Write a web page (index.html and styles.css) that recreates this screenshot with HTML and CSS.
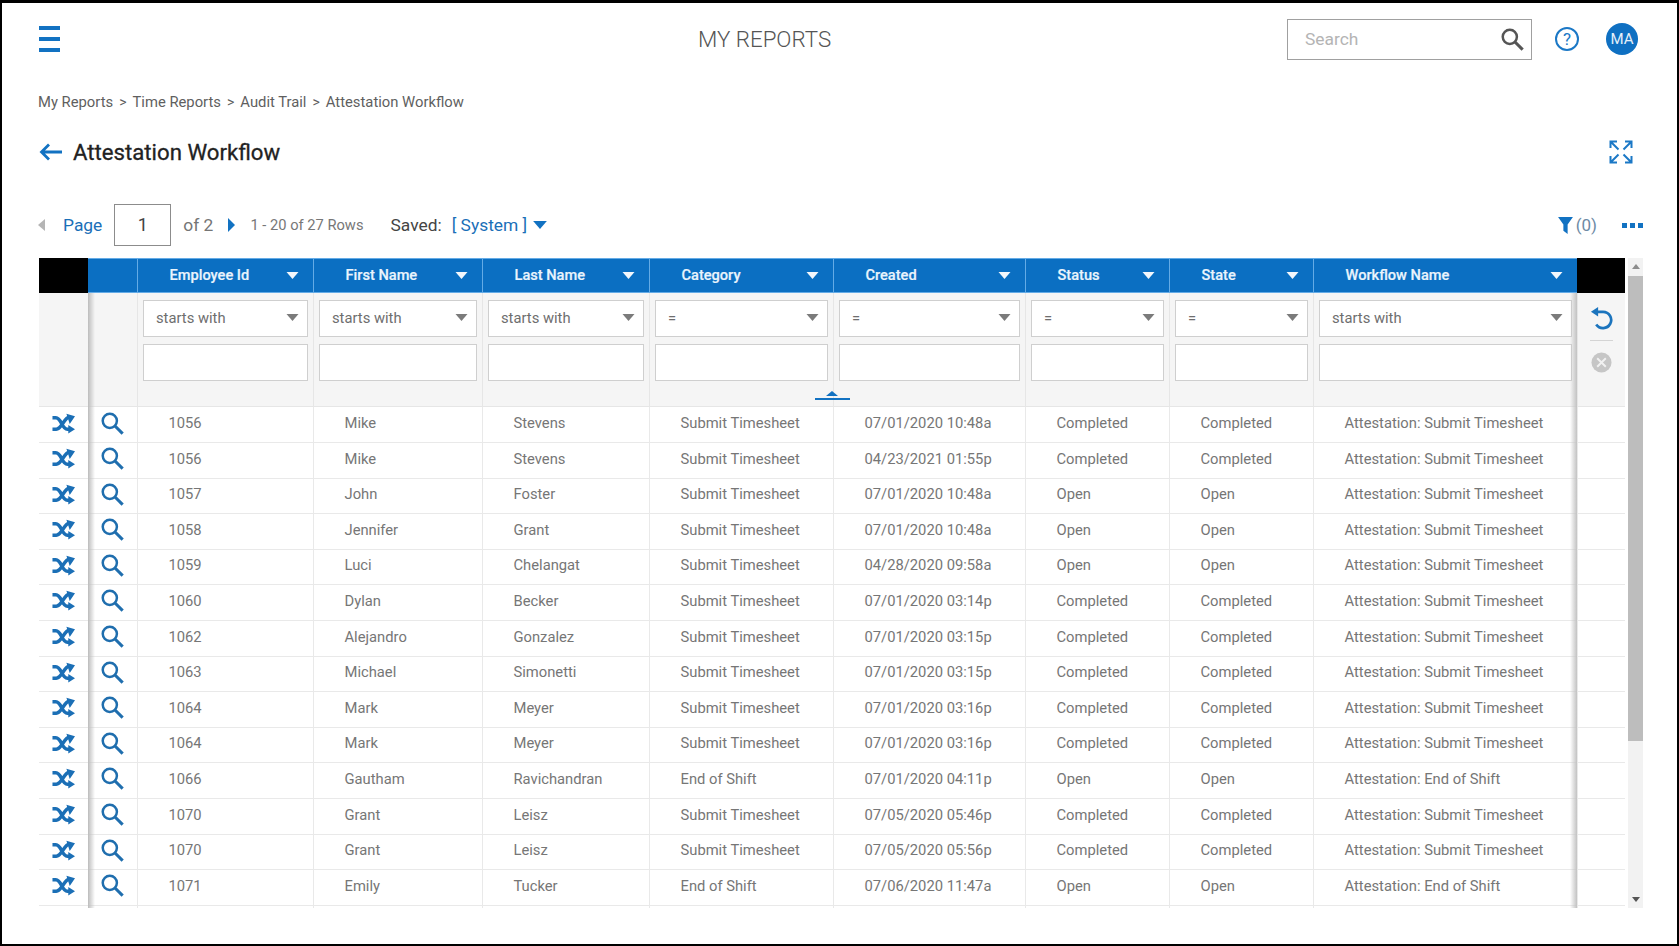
FILE: index.html
```html
<!DOCTYPE html>
<html lang="en">
<head>
<meta charset="utf-8">
<title>Attestation Workflow</title>
<link rel="stylesheet" href="styles.css">
</head>
<body>
<svg class="defs" width="0" height="0" aria-hidden="true">
  <symbol id="i-shuffle" viewBox="0 0 24 21">
    <path d="M0.500 4.500h3.500c6 0 6 12 12 12h2.500M0.500 16.500h4c3 0 5-3.500 7-6.500s4-6 7-6.500" fill="none" stroke="currentColor" stroke-width="3.600"/>
    <path d="M15 0.200l9 2.800-5.500 8zM17 12l7 4.500-7 4.500z" fill="currentColor"/>
  </symbol>
  <symbol id="i-search" viewBox="0 0 24 24">
    <circle cx="9.2" cy="9.2" r="7.4" fill="none" stroke="currentColor" stroke-width="2.6"/>
    <path d="M14.6 14.6l8 8" fill="none" stroke="currentColor" stroke-width="3.2"/>
  </symbol>
  <symbol id="i-caret" viewBox="0 0 12 7">
    <path d="M0 0h12L6 7z" fill="currentColor"/>
  </symbol>
</svg>
<div class="frame">
  <header class="topbar">
    <div class="burger"><span></span><span></span><span></span></div>
    <div class="app-title">MY REPORTS</div>
    <div class="search">
      <span class="search-ph">Search</span>
      <svg class="search-icon"><use href="#i-search"/></svg>
    </div>
    <div class="help">?</div>
    <div class="avatar">MA</div>
  </header>

  <nav class="crumbs">
    <span>My Reports</span><i>&gt;</i><span>Time Reports</span><i>&gt;</i><span>Audit Trail</span><i>&gt;</i><span>Attestation Workflow</span>
  </nav>

  <div class="title-row">
    <svg class="back" viewBox="0 0 24 18"><path d="M23 9H3M10 1.5L2.5 9l7.500 7.500" fill="none" stroke="currentColor" stroke-width="2.800"/></svg>
    <h1>Attestation Workflow</h1>
    <svg class="expand" viewBox="0 0 24 24">
      <g fill="none" stroke="currentColor" stroke-width="2">
        <path d="M1.500 8V1.500H8M1.500 1.500l8 8M22.500 8V1.500H16M22.500 1.500l-8 8M1.500 16v6.500H8M1.500 22.500l8-8M22.500 16v6.500H16M22.500 22.500l-8-8"/>
      </g>
    </svg>
  </div>

  <div class="pager">
    <span class="tri-left"></span>
    <span class="page-label">Page</span>
    <div class="page-box">1</div>
    <span class="page-of">of 2</span>
    <span class="tri-right"></span>
    <span class="page-rows">1 - 20 of 27 Rows</span>
    <span class="saved">Saved:</span>
    <span class="saved-val">[ System ]</span>
    <svg class="saved-caret"><use href="#i-caret"/></svg>
    <svg class="funnel" viewBox="0 0 14 16"><path d="M0 0h14L9 7v9L5 13V7z" fill="currentColor"/></svg>
    <span class="filter-count">(0)</span>
    <div class="dots"><span></span><span></span><span></span></div>
  </div>

  <div class="grid-wrap">
    <div class="grid">
      <div class="row head">
        <div class="hc black"></div>
        <div class="hc"></div>
        <div class="hc">Employee Id<svg><use href="#i-caret"/></svg></div>
        <div class="hc">First Name<svg><use href="#i-caret"/></svg></div>
        <div class="hc">Last Name<svg><use href="#i-caret"/></svg></div>
        <div class="hc">Category<svg><use href="#i-caret"/></svg></div>
        <div class="hc">Created<svg><use href="#i-caret"/></svg></div>
        <div class="hc">Status<svg><use href="#i-caret"/></svg></div>
        <div class="hc">State<svg><use href="#i-caret"/></svg></div>
        <div class="hc">Workflow Name<svg><use href="#i-caret"/></svg></div>
        <div class="hc black"></div>
      </div>
      <div class="row filters">
        <div class="fc"></div>
        <div class="fc"></div>
        <div class="fc"><div class="sel">starts with<svg><use href="#i-caret"/></svg></div><div class="inp"></div></div>
        <div class="fc"><div class="sel">starts with<svg><use href="#i-caret"/></svg></div><div class="inp"></div></div>
        <div class="fc"><div class="sel">starts with<svg><use href="#i-caret"/></svg></div><div class="inp"></div></div>
        <div class="fc"><div class="sel">=<svg><use href="#i-caret"/></svg></div><div class="inp"></div></div>
        <div class="fc"><div class="sel">=<svg><use href="#i-caret"/></svg></div><div class="inp"></div></div>
        <div class="fc"><div class="sel">=<svg><use href="#i-caret"/></svg></div><div class="inp"></div></div>
        <div class="fc"><div class="sel">=<svg><use href="#i-caret"/></svg></div><div class="inp"></div></div>
        <div class="fc"><div class="sel">starts with<svg><use href="#i-caret"/></svg></div><div class="inp"></div></div>
        <div class="fc actions">
          <svg class="undo" viewBox="0 0 24 24"><path d="M6 5h7.500a8.500 8.500 0 1 1-7 13.200" fill="none" stroke="currentColor" stroke-width="2.800"/><path d="M8.500 0v10L1 5z" fill="currentColor"/></svg>
          <span class="act-line"></span>
          <svg class="clear" viewBox="0 0 22 22"><circle cx="11" cy="11" r="10.500" fill="#c6c6c6"/><path d="M6.500 6.500l9 9M15.500 6.500l-9 9" stroke="#f1f1f1" stroke-width="2"/></svg>
        </div>
        <div class="collapse"><span></span></div>
      </div>

      <div class="row"><div class="c ic"><svg class="shuffle"><use href="#i-shuffle"/></svg></div><div class="c ic"><svg class="mag"><use href="#i-search"/></svg></div><div class="c">1056</div><div class="c">Mike</div><div class="c">Stevens</div><div class="c">Submit Timesheet</div><div class="c">07/01/2020 10:48a</div><div class="c">Completed</div><div class="c">Completed</div><div class="c">Attestation: Submit Timesheet</div><div class="c"></div></div>
      <div class="row"><div class="c ic"><svg class="shuffle"><use href="#i-shuffle"/></svg></div><div class="c ic"><svg class="mag"><use href="#i-search"/></svg></div><div class="c">1056</div><div class="c">Mike</div><div class="c">Stevens</div><div class="c">Submit Timesheet</div><div class="c">04/23/2021 01:55p</div><div class="c">Completed</div><div class="c">Completed</div><div class="c">Attestation: Submit Timesheet</div><div class="c"></div></div>
      <div class="row"><div class="c ic"><svg class="shuffle"><use href="#i-shuffle"/></svg></div><div class="c ic"><svg class="mag"><use href="#i-search"/></svg></div><div class="c">1057</div><div class="c">John</div><div class="c">Foster</div><div class="c">Submit Timesheet</div><div class="c">07/01/2020 10:48a</div><div class="c">Open</div><div class="c">Open</div><div class="c">Attestation: Submit Timesheet</div><div class="c"></div></div>
      <div class="row"><div class="c ic"><svg class="shuffle"><use href="#i-shuffle"/></svg></div><div class="c ic"><svg class="mag"><use href="#i-search"/></svg></div><div class="c">1058</div><div class="c">Jennifer</div><div class="c">Grant</div><div class="c">Submit Timesheet</div><div class="c">07/01/2020 10:48a</div><div class="c">Open</div><div class="c">Open</div><div class="c">Attestation: Submit Timesheet</div><div class="c"></div></div>
      <div class="row"><div class="c ic"><svg class="shuffle"><use href="#i-shuffle"/></svg></div><div class="c ic"><svg class="mag"><use href="#i-search"/></svg></div><div class="c">1059</div><div class="c">Luci</div><div class="c">Chelangat</div><div class="c">Submit Timesheet</div><div class="c">04/28/2020 09:58a</div><div class="c">Open</div><div class="c">Open</div><div class="c">Attestation: Submit Timesheet</div><div class="c"></div></div>
      <div class="row"><div class="c ic"><svg class="shuffle"><use href="#i-shuffle"/></svg></div><div class="c ic"><svg class="mag"><use href="#i-search"/></svg></div><div class="c">1060</div><div class="c">Dylan</div><div class="c">Becker</div><div class="c">Submit Timesheet</div><div class="c">07/01/2020 03:14p</div><div class="c">Completed</div><div class="c">Completed</div><div class="c">Attestation: Submit Timesheet</div><div class="c"></div></div>
      <div class="row"><div class="c ic"><svg class="shuffle"><use href="#i-shuffle"/></svg></div><div class="c ic"><svg class="mag"><use href="#i-search"/></svg></div><div class="c">1062</div><div class="c">Alejandro</div><div class="c">Gonzalez</div><div class="c">Submit Timesheet</div><div class="c">07/01/2020 03:15p</div><div class="c">Completed</div><div class="c">Completed</div><div class="c">Attestation: Submit Timesheet</div><div class="c"></div></div>
      <div class="row"><div class="c ic"><svg class="shuffle"><use href="#i-shuffle"/></svg></div><div class="c ic"><svg class="mag"><use href="#i-search"/></svg></div><div class="c">1063</div><div class="c">Michael</div><div class="c">Simonetti</div><div class="c">Submit Timesheet</div><div class="c">07/01/2020 03:15p</div><div class="c">Completed</div><div class="c">Completed</div><div class="c">Attestation: Submit Timesheet</div><div class="c"></div></div>
      <div class="row"><div class="c ic"><svg class="shuffle"><use href="#i-shuffle"/></svg></div><div class="c ic"><svg class="mag"><use href="#i-search"/></svg></div><div class="c">1064</div><div class="c">Mark</div><div class="c">Meyer</div><div class="c">Submit Timesheet</div><div class="c">07/01/2020 03:16p</div><div class="c">Completed</div><div class="c">Completed</div><div class="c">Attestation: Submit Timesheet</div><div class="c"></div></div>
      <div class="row"><div class="c ic"><svg class="shuffle"><use href="#i-shuffle"/></svg></div><div class="c ic"><svg class="mag"><use href="#i-search"/></svg></div><div class="c">1064</div><div class="c">Mark</div><div class="c">Meyer</div><div class="c">Submit Timesheet</div><div class="c">07/01/2020 03:16p</div><div class="c">Completed</div><div class="c">Completed</div><div class="c">Attestation: Submit Timesheet</div><div class="c"></div></div>
      <div class="row"><div class="c ic"><svg class="shuffle"><use href="#i-shuffle"/></svg></div><div class="c ic"><svg class="mag"><use href="#i-search"/></svg></div><div class="c">1066</div><div class="c">Gautham</div><div class="c">Ravichandran</div><div class="c">End of Shift</div><div class="c">07/01/2020 04:11p</div><div class="c">Open</div><div class="c">Open</div><div class="c">Attestation: End of Shift</div><div class="c"></div></div>
      <div class="row"><div class="c ic"><svg class="shuffle"><use href="#i-shuffle"/></svg></div><div class="c ic"><svg class="mag"><use href="#i-search"/></svg></div><div class="c">1070</div><div class="c">Grant</div><div class="c">Leisz</div><div class="c">Submit Timesheet</div><div class="c">07/05/2020 05:46p</div><div class="c">Completed</div><div class="c">Completed</div><div class="c">Attestation: Submit Timesheet</div><div class="c"></div></div>
      <div class="row"><div class="c ic"><svg class="shuffle"><use href="#i-shuffle"/></svg></div><div class="c ic"><svg class="mag"><use href="#i-search"/></svg></div><div class="c">1070</div><div class="c">Grant</div><div class="c">Leisz</div><div class="c">Submit Timesheet</div><div class="c">07/05/2020 05:56p</div><div class="c">Completed</div><div class="c">Completed</div><div class="c">Attestation: Submit Timesheet</div><div class="c"></div></div>
      <div class="row"><div class="c ic"><svg class="shuffle"><use href="#i-shuffle"/></svg></div><div class="c ic"><svg class="mag"><use href="#i-search"/></svg></div><div class="c">1071</div><div class="c">Emily</div><div class="c">Tucker</div><div class="c">End of Shift</div><div class="c">07/06/2020 11:47a</div><div class="c">Open</div><div class="c">Open</div><div class="c">Attestation: End of Shift</div><div class="c"></div></div>
      <div class="row"><div class="c"></div><div class="c"></div><div class="c"></div><div class="c"></div><div class="c"></div><div class="c"></div><div class="c"></div><div class="c"></div><div class="c"></div><div class="c"></div><div class="c"></div></div>
    </div>
    <div class="scrollbar">
      <span class="sb-up"></span>
      <div class="sb-thumb"></div>
      <span class="sb-down"></span>
    </div>
  </div>
</div>
</body>
</html>
```

FILE: styles.css
```css
* { box-sizing: border-box; }
html, body { margin: 0; padding: 0; }
body {
  width: 1679px;
  height: 946px;
  overflow: hidden;
  font-family: Roboto, "Liberation Sans", sans-serif;
  background: #fff;
  color: #555;
}
.defs { position: absolute; }
.frame {
  width: 1679px;
  height: 946px;
  border-style: solid;
  border-color: #000;
  border-width: 3px 2px 2px 2px;
  background: #fff;
  overflow: hidden;
}

/* top bar */
.topbar {
  display: flex;
  align-items: center;
  height: 72px;
}
.burger {
  display: flex;
  flex-direction: column;
  gap: 7px;
  width: 21px;
  margin-left: 37px;
}
.burger span { height: 4px; background: #1272c2; }
.app-title {
  margin-left: 638px;
  width: 135px;
  font-size: 22.3px;
  font-weight: 300;
  color: #555;
  white-space: nowrap;
}
.search {
  display: flex;
  align-items: center;
  justify-content: space-between;
  width: 245px;
  height: 41px;
  margin-left: 454px;
  padding: 0 7px 0 17px;
  border: 1.5px solid #a0a0a0;
}
.search-ph { font-size: 17.4px; color: #b4b4b4; }
.search-icon { width: 23px; height: 23px; color: #555; }
.help {
  width: 24px;
  height: 24px;
  margin-left: 23px;
  border: 2px solid #1b78c6;
  border-radius: 50%;
  font-size: 17px;
  line-height: 20px;
  text-align: center;
  color: #1b78c6;
}
.avatar {
  width: 32px;
  height: 32px;
  margin-left: 27px;
  border-radius: 50%;
  background: #0f70c2;
  color: #e6f0fa;
  font-size: 15px;
  line-height: 32px;
  text-align: center;
}

/* breadcrumb */
.crumbs {
  display: flex;
  align-items: center;
  height: 24px;
  margin-top: 15px;
  padding-left: 36px;
  font-size: 14.8px;
  color: #5f5f5f;
}
.crumbs i { margin: 0 6px; font-style: normal; font-size: 14px; }

/* title */
.title-row {
  display: flex;
  align-items: center;
  height: 40px;
  margin-top: 18px;
  padding-left: 37px;
}
.back { width: 24px; height: 18px; color: #1272c2; }
.title-row h1 {
  margin: 0 0 0 10px;
  font-size: 22.2px;
  font-weight: 400;
  color: #222;
  -webkit-text-stroke: 0.3px #222;
}
.expand { width: 24px; height: 24px; margin-left: auto; margin-right: 44px; color: #1b78c6; }

/* pager */
.pager {
  display: flex;
  align-items: center;
  height: 42px;
  margin-top: 32px;
  padding-left: 36px;
}
.tri-left {
  border-style: solid;
  border-width: 6px 7px 6px 0;
  border-color: transparent #b5b5b5 transparent transparent;
}
.page-label { margin-left: 18px; font-size: 17.4px; color: #1a6fb8; }
.page-box {
  width: 57px;
  height: 42px;
  margin-left: 12px;
  border: 1.5px solid #8c8c8c;
  font-size: 18px;
  line-height: 39px;
  text-align: center;
  color: #444;
}
.page-of { margin-left: 12px; font-size: 17.4px; color: #757575; }
.tri-right {
  margin-left: 15px;
  border-style: solid;
  border-width: 7px 0 7px 7px;
  border-color: transparent transparent transparent #1272c2;
}
.page-rows { margin-left: 15px; font-size: 14.7px; color: #777; }
.saved { margin-left: 27px; font-size: 17.4px; color: #444; }
.saved-val { margin-left: 10px; font-size: 17.4px; color: #1a6fb8; }
.saved-caret { width: 14px; height: 8px; margin-left: 6px; color: #1272c2; }
.funnel { width: 15px; height: 17px; margin-left: auto; color: #1272c2; }
.filter-count { margin-left: 3px; font-size: 17px; color: #6d8aa5; }
.dots { display: flex; gap: 3px; margin-left: 25px; margin-right: 34px; }
.dots span { width: 5px; height: 5px; background: #1272c2; }

/* grid */
.grid-wrap {
  display: flex;
  height: 650px;
  margin-top: 12px;
  margin-left: 37px;
}
.grid {
  position: relative;
  width: 1586px;
  height: 650px;
  overflow: hidden;
}
.grid::before,
.grid::after {
  content: "";
  position: absolute;
  z-index: 2;
  top: 35px;
  bottom: 0;
  width: 7px;
}
.grid::before { left: 49px; background: linear-gradient(to right, #bdbdbd, rgba(200,200,200,0)); }
.grid::after { left: 1531px; background: linear-gradient(to left, #c2c2c2, rgba(200,200,200,0)); }
.row {
  display: grid;
  grid-template-columns: 49px 49px 176px 169px 167px 184px 192px 144px 144px 264px 48px;
  height: 35.6px;
}
.head { height: 35px; background: #0b6fc2; }
.hc {
  display: flex;
  align-items: center;
  justify-content: space-between;
  padding: 0 14px 1px 31.5px;
  border-left: 1px solid #64abe6;
  border-top: 1px solid #64abe6;
  border-bottom: 1px solid #64abe6;
  font-size: 14.6px;
  font-weight: 500;
  color: #e9f4fd;
  white-space: nowrap;
  -webkit-text-stroke: 0.2px #e9f4fd;
}
.hc svg { width: 13px; height: 7px; color: #f2f7fc; }
.hc.black { background: #000; border: 0; }
.hc:nth-child(2) { border-left: 0; }

.filters { position: relative; height: 114px; background: #f5f5f5; }
.fc {
  padding: 7px 5px 0;
  border-left: 1px solid #e6e6e6;
  border-bottom: 1px solid #e6e6e6;
}
.fc:first-child { border-left: 0; }
.sel,
.inp {
  height: 37px;
  background: #fff;
  border: 1.5px solid #cfcfcf;
}
.sel {
  display: flex;
  align-items: center;
  justify-content: space-between;
  padding: 0 8px 2px 12px;
  font-size: 14.75px;
  color: #6e6e6e;
}
.sel svg { width: 13px; height: 7px; color: #7b7b7b; }
.inp { margin-top: 7px; }
.actions {
  display: flex;
  flex-direction: column;
  align-items: center;
  padding: 14px 0 0;
}
.undo { width: 23px; height: 23px; color: #1b74bd; }
.act-line { width: 23px; height: 1px; margin-top: 10px; background: #d4d4d4; }
.clear { width: 21px; height: 21px; margin-top: 11px; }
.collapse {
  position: absolute;
  left: 776px;
  top: 105px;
  width: 35px;
  height: 2px;
  background: #1272c2;
}
.collapse span {
  position: absolute;
  left: 11px;
  top: -7px;
  border-style: solid;
  border-width: 0 6px 5px;
  border-color: transparent transparent #1272c2;
}

.c {
  padding: 0 4px 3px 30.5px;
  border-left: 1px solid #e9e9e9;
  border-bottom: 1px solid #e9e9e9;
  font-size: 14.75px;
  line-height: 32px;
  color: #767676;
  white-space: nowrap;
}
.c:first-child { border-left: 0; }
.ic { display: flex; align-items: center; justify-content: center; padding: 0 0 3px; }
.shuffle { width: 23px; height: 21px; color: #1b6fb6; }
.mag { width: 23px; height: 23px; margin-right: 2px; color: #1f6eae; }

/* scrollbar */
.scrollbar {
  display: flex;
  flex-direction: column;
  align-items: center;
  justify-content: space-between;
  width: 15px;
  margin-left: 3px;
  background: #f2f2f2;
}
.sb-up, .sb-down { display: block; width: 0; height: 0; border-style: solid; margin: 6px 0; }
.sb-up { border-width: 0 4px 5px; border-color: transparent transparent #8d8d8d; }
.sb-down { border-width: 5px 4px 0; border-color: #555 transparent transparent; }
.sb-thumb { width: 100%; height: 465px; margin-top: 1px; margin-bottom: auto; background: #bdbdbd; }
```
